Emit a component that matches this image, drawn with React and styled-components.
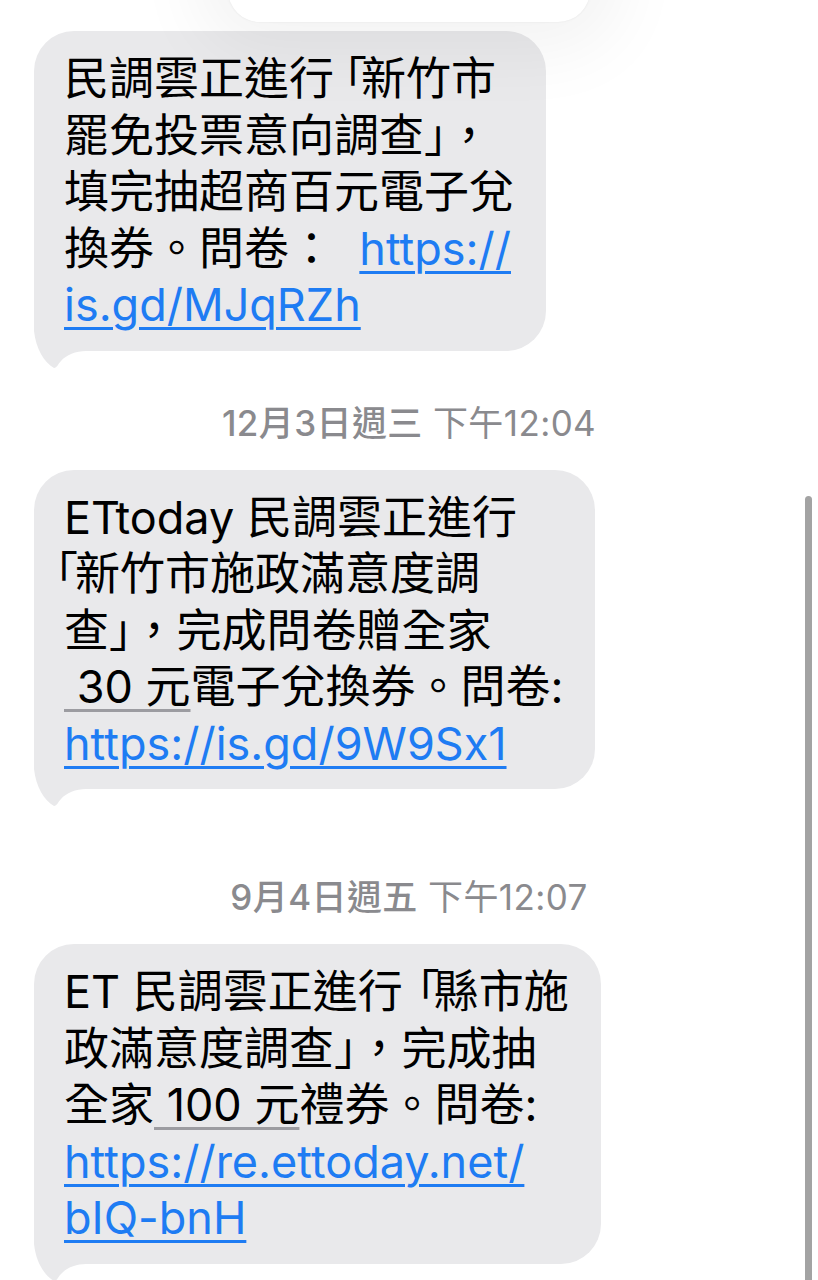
import React from "react";
import styled, { createGlobalStyle } from "styled-components";

const GlobalStyle = createGlobalStyle`
  html, body {
    margin: 0;
    padding: 0;
    background: #ffffff;
  }
  body {
    font-family: Inter, "Noto Sans CJK TC", sans-serif;
    -webkit-font-smoothing: antialiased;
  }
`;

function BubbleTail() {
  return (
    <Tail width="60" height="62" viewBox="0 0 60 62">
      <path
        d="M0 0 H60 V44 H52 C42 44 32 48 27 54 C24 57 23 61 20 61 C10 55 2 42 0 24 Z"
        fill="#e9e9eb"
      />
    </Tail>
  );
}

function Message({ gap, children }) {
  return (
    <Bubble $gap={gap}>
      {children}
      <BubbleTail />
    </Bubble>
  );
}

function Stamp({ date, time, gap }) {
  return (
    <TimeStamp $gap={gap}>
      <StampDate>{date}</StampDate> {time}
    </TimeStamp>
  );
}

export default function App() {
  return (
    <>
      <GlobalStyle />
      <Screen>
        <MenuCard />
        <Thread>
          <Message>
            <Line>
              民調雲正進<Kern $by={-12}>行</Kern>
              <Kern $by={-6}>「</Kern>新竹市
            </Line>
            <Line>罷免投票意向調查」，</Line>
            <Line>填完抽超商百元電子兌</Line>
            <Line>
              換券。問卷：{"  "}
              <Link>https://</Link>
            </Line>
            <Line>
              <Link>is.gd/MJqRZh</Link>
            </Line>
          </Message>

          <Stamp date="12月3日週三" time="下午12:04" gap={51} />

          <Message gap={26}>
            <Line>ETtoday 民調雲正進行</Line>
            <Line $indent={-31}>
              <Kern $by={-3}>「</Kern>新竹市施政滿意度調
            </Line>
            <Line>查」，完成問卷贈全家</Line>
            <Line>
              <Detected> 30 元</Detected>電子兌換券。問卷:
            </Line>
            <Line>
              <Link>https://is.gd/9W9Sx1</Link>
            </Line>
          </Message>

          <Stamp date="9月4日週五" time="下午12:07" gap={87} />

          <Message gap={26}>
            <Line>
              ET 民調雲正進<Kern $by={-8}>行</Kern>
              <Kern $by={-6}>「</Kern>縣市施
            </Line>
            <Line>政滿意度調查」，完成抽</Line>
            <Line>
              全家<Detected> 100 元</Detected>禮券。問卷:
            </Line>
            <Line>
              <Link>https://re.ettoday.net/</Link>
            </Line>
            <Line>
              <Link>bIQ-bnH</Link>
            </Line>
          </Message>
        </Thread>
        <ScrollThumb />
      </Screen>
    </>
  );
}

const Screen = styled.div`
  position: relative;
  width: 818px;
  height: 1280px;
  overflow: hidden;
  background: #ffffff;
`;

const MenuCard = styled.div`
  position: absolute;
  left: 228px;
  top: -100px;
  width: 362px;
  height: 122px;
  border-radius: 32px;
  background: #ffffff;
  box-shadow: 0 0 2px rgba(0, 0, 0, 0.08), 0 0 70px 30px rgba(0, 0, 0, 0.05);
  z-index: 2;
`;

const Thread = styled.div`
  display: flex;
  flex-direction: column;
  align-items: flex-start;
  padding-top: 31px;
`;

const Bubble = styled.div`
  position: relative;
  margin: ${(p) => p.$gap || 0}px 0 0 34px;
  padding: 20px 32px 17px 30px;
  border-radius: 40px;
  background: #e9e9eb;
  color: #000000;
  font-size: 45px;
  line-height: 56.5px;
`;

const Line = styled.div`
  position: relative;
  z-index: 1;
  white-space: pre;
  text-indent: ${(p) => p.$indent || 0}px;
`;

const Kern = styled.span`
  letter-spacing: ${(p) => p.$by}px;
`;

const Link = styled.span`
  color: #1e7cf3;
  text-decoration: underline;
  text-decoration-thickness: 3px;
  text-underline-offset: 6px;
`;

const Detected = styled.span`
  text-decoration: underline;
  text-decoration-color: #9c9ca1;
  text-decoration-thickness: 3px;
  text-underline-offset: 6px;
`;

const Tail = styled.svg`
  position: absolute;
  left: 0;
  bottom: -18px;
  display: block;
`;

const TimeStamp = styled.div`
  align-self: stretch;
  margin-top: ${(p) => p.$gap || 0}px;
  text-align: center;
  font-size: 35px;
  line-height: 42px;
  letter-spacing: 0.4px;
  color: #8a8a8e;
  white-space: pre;
`;

const StampDate = styled.span`
  font-weight: 500;
`;

const ScrollThumb = styled.div`
  position: absolute;
  right: 6px;
  top: 496px;
  width: 7px;
  height: 800px;
  border-radius: 4px;
  background: #a3a3a3;
`;
